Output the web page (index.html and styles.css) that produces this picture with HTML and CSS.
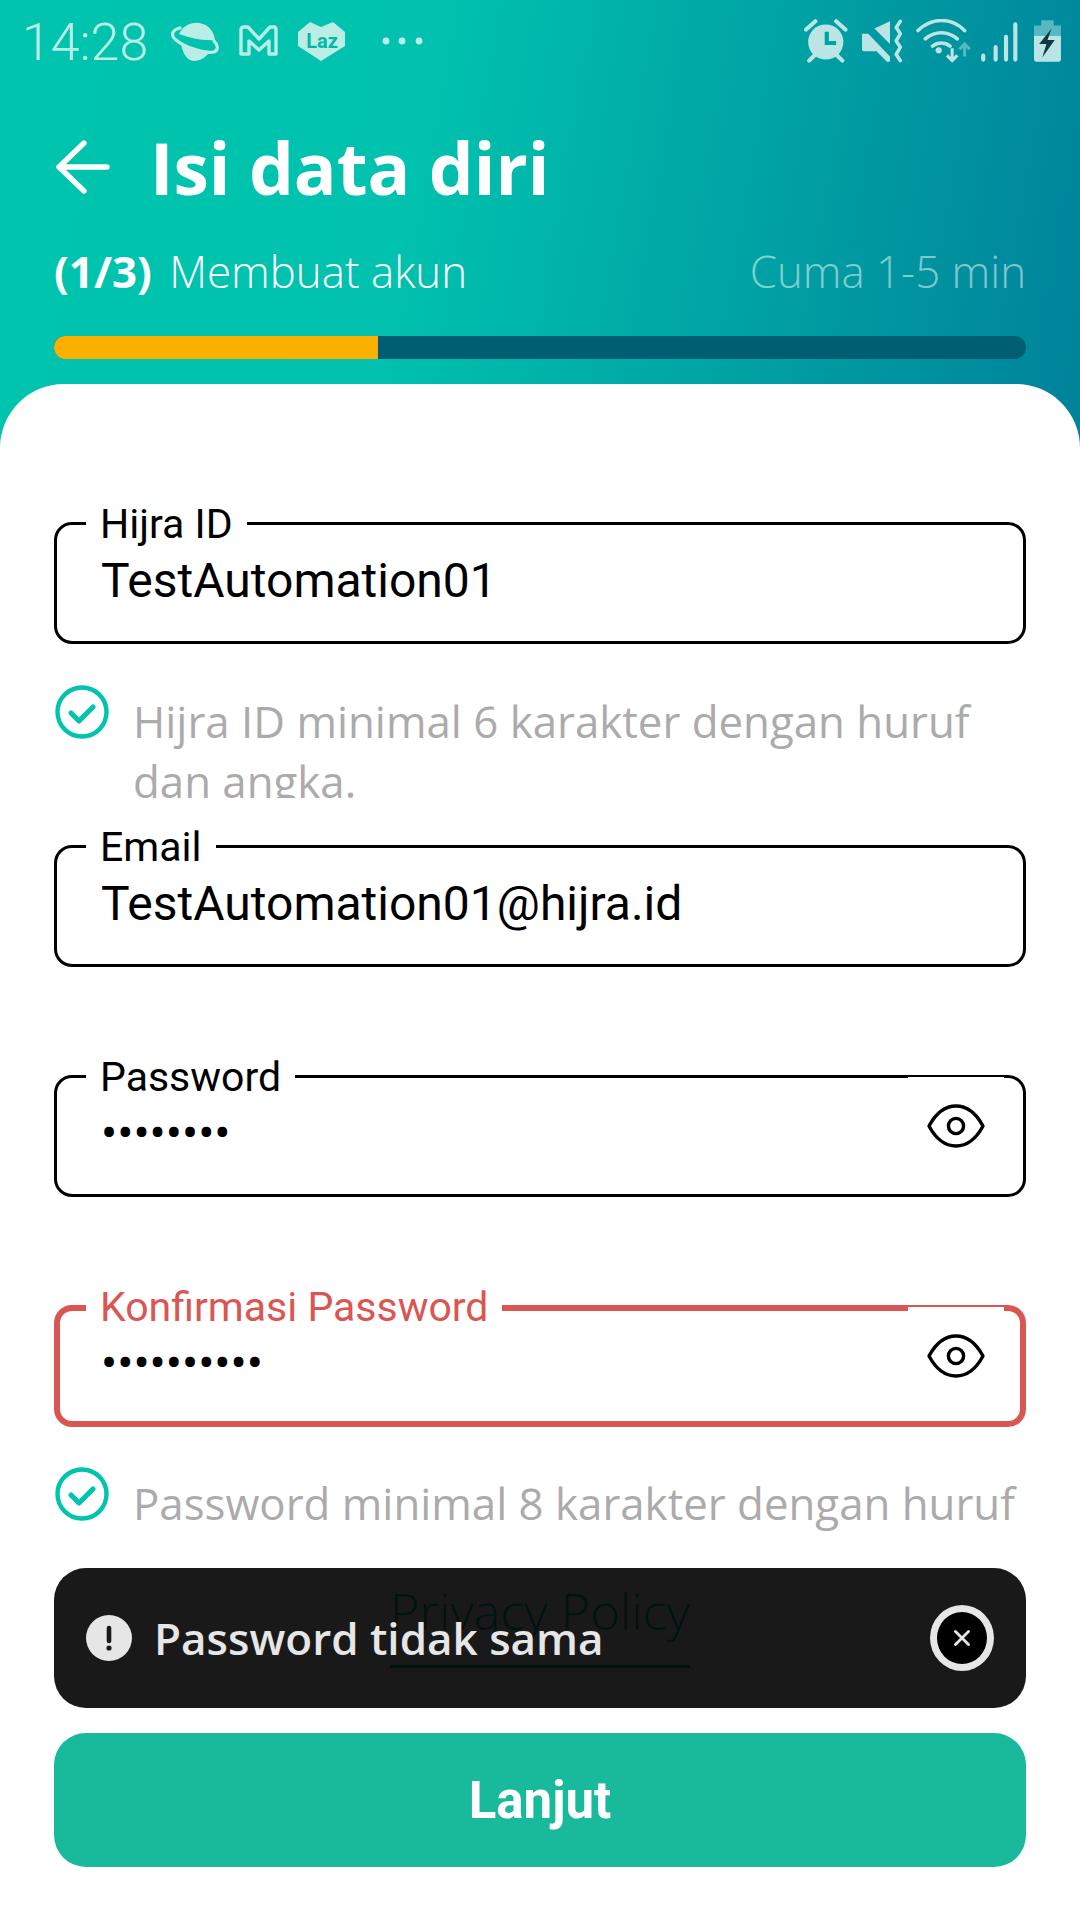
FILE: index.html
```html
<!DOCTYPE html>
<html lang="en">
<head>
    <meta charset="UTF-8">
    <meta name="viewport" content="width=device-width, initial-scale=1.0">
    <title>Isi data diri</title>
    <link rel="stylesheet" href="styles.css">
</head>
<body>
<div class="page">
    <header class="header">
        <!-- Status bar -->
        <div class="status-bar">
            <span class="status-time">14:28</span>
            <svg class="status-left-icons" width="260" height="44" viewBox="165 20 260 44">
                <path d="M179 34C183 25 192 22 199 23c9 1 15 8 16 17-11 1-25-2-36-6z" fill="#b9ede6"/>
                <path d="M181 43c9 5 20 8 29 8-3 6-10 10-16 10-7 0-12-9-13-18z" fill="#b9ede6"/>
                <path d="M180 28c-8 2-10 7-4 12 8 7 29 14 38 12 5-2 4-7 0-11" fill="none" stroke="#b9ede6" stroke-width="3.2" stroke-linecap="round"/>
                <path d="M241 54V30q0-3 3-3h4l11 12 11-12h4q2 0 2 3v24h-7V41l-10 9-10-9v13z" fill="none" stroke="#b9ede6" stroke-width="3.4" stroke-linejoin="round"/>
                <path d="M298 32l12-10 11 5 12-5 12 10v14l-24 15-23-15z" fill="#b9ede6"/>
                <text x="322" y="48" class="laz-text" text-anchor="middle">Laz</text>
                <circle cx="386" cy="41" r="3.4" fill="#b9ede6"/>
                <circle cx="402" cy="41" r="3.4" fill="#b9ede6"/>
                <circle cx="419" cy="41" r="3.4" fill="#b9ede6"/>
            </svg>
            <svg class="status-right-icons" width="259" height="46" viewBox="795 19 250 44">
                <!-- alarm -->
                <circle cx="816" cy="41" r="17" fill="#bbe5e5"/>
                <path d="M817 31v11h9" fill="none" stroke="#00a3a3" stroke-width="4"/>
                <path d="M797 29l9-8M835 29l-9-8M805 54l-5 5M827 54l5 5" stroke="#bbe5e5" stroke-width="4" stroke-linecap="round"/>
                <!-- muted speaker -->
                <path d="M851 33h6l21 22v5h-3l-10-10h-12q-2 0-2-2zM878 21v22l-15-15z" fill="#bbe5e5"/>
                <path d="M888 21l-4 6 4 6-4 7 4 6-4 7 4 6" fill="none" stroke="#bbe5e5" stroke-width="3.4" stroke-linecap="round" stroke-linejoin="round"/>
                <!-- wifi -->
                <path d="M905 30c13-13 33-13 45 0M912 38c9-8 22-8 31 0M919 45c5-4 12-4 17 0" fill="none" stroke="#bbe5e5" stroke-width="3.4" stroke-linecap="round"/>
                <circle cx="925" cy="49" r="3" fill="#bbe5e5"/>
                <path d="M938 47v11M933 54l5 5 5-5" fill="none" stroke="#bbe5e5" stroke-width="3"/>
                <path d="M950 55V44M945 48l5-5 5 5" fill="none" stroke="#57b9b9" stroke-width="3"/>
                <!-- signal -->
                <path d="M968 54v4M980 46v12M990 36v22M999 24v34" stroke="#bbe5e5" stroke-width="4" stroke-linecap="round"/>
                <!-- battery -->
                <path d="M1024 20h12v5h7v10h-26V25h7z" fill="#57b9c0"/>
                <path d="M1017 35h26v23q0 2-2 2h-22q-2 0-2-2z" fill="#bbe5e5"/>
                <path d="M1034 28l-12 15h7l-4 13 12-17h-7z" fill="#0f3a40"/>
            </svg>
        </div>

        <!-- Title -->
        <div class="title-row">
            <svg class="back-icon" width="54" height="54" viewBox="0 0 54 54">
                <path d="M28 3L3 27l25 24M3 27h48" fill="none" stroke="#fff" stroke-width="5.4" stroke-linecap="round" stroke-linejoin="round"/>
            </svg>
            <h1 class="title">Isi data diri</h1>
        </div>

        <!-- Step info -->
        <div class="step-row">
            <span class="step-label"><b>(1/3)</b> Membuat akun</span>
            <span class="step-time">Cuma 1-5 min</span>
        </div>
        <div class="progress"><div class="progress-fill"></div></div>
    </header>

    <main class="sheet">
        <!-- Hijra ID -->
        <div class="field has-hint">
            <span class="field-label">Hijra ID</span>
            <span class="field-value">TestAutomation01</span>
        </div>
        <div class="hint clipped">
            <svg class="check-icon" width="54" height="54" viewBox="0 0 54 54">
                <circle cx="27" cy="27" r="24.5" fill="none" stroke="#00c4ae" stroke-width="4.4"/>
                <path d="M16 28l8 8 14-14" fill="none" stroke="#00c4ae" stroke-width="5.2" stroke-linecap="round" stroke-linejoin="round"/>
            </svg>
            <p class="hint-text">Hijra ID minimal 6 karakter dengan huruf dan angka.</p>
        </div>

        <!-- Email -->
        <div class="field">
            <span class="field-label">Email</span>
            <span class="field-value">TestAutomation01@hijra.id</span>
        </div>

        <!-- Password -->
        <div class="field">
            <span class="field-label">Password</span>
            <span class="field-value dots">••••••••</span>
            <div class="eye-box">
                <svg width="58" height="44" viewBox="0 0 58 44">
                    <path d="M2 22C9 9 18 2 29 2s20 7 27 20c-7 13-16 20-27 20S9 35 2 22z" fill="none" stroke="#000" stroke-width="3.4" stroke-linejoin="round"/>
                    <circle cx="29" cy="22" r="7.6" fill="none" stroke="#000" stroke-width="3.4"/>
                </svg>
            </div>
        </div>

        <!-- Konfirmasi Password -->
        <div class="field field-error has-hint">
            <span class="field-label">Konfirmasi Password</span>
            <span class="field-value dots">••••••••••</span>
            <div class="eye-box">
                <svg width="58" height="44" viewBox="0 0 58 44">
                    <path d="M2 22C9 9 18 2 29 2s20 7 27 20c-7 13-16 20-27 20S9 35 2 22z" fill="none" stroke="#000" stroke-width="3.4" stroke-linejoin="round"/>
                    <circle cx="29" cy="22" r="7.6" fill="none" stroke="#000" stroke-width="3.4"/>
                </svg>
            </div>
        </div>
        <div class="hint">
            <svg class="check-icon" width="54" height="54" viewBox="0 0 54 54">
                <circle cx="27" cy="27" r="24.5" fill="none" stroke="#00c4ae" stroke-width="4.4"/>
                <path d="M16 28l8 8 14-14" fill="none" stroke="#00c4ae" stroke-width="5.2" stroke-linecap="round" stroke-linejoin="round"/>
            </svg>
            <p class="hint-text">Password minimal 8 karakter dengan huruf</p>
        </div>

        <a class="privacy">Privacy Policy</a>

        <button class="next-button">Lanjut</button>

        <!-- Toast over the form -->
        <div class="toast">
            <span class="toast-icon">
                <svg width="46" height="46" viewBox="0 0 46 46">
                    <circle cx="23" cy="23" r="23" fill="#e6e6e6"/>
                    <path d="M23 13v13" stroke="#1a1a1a" stroke-width="4.6" stroke-linecap="round"/>
                    <circle cx="23" cy="33" r="2.6" fill="#1a1a1a"/>
                </svg>
            </span>
            <span class="toast-text">Password tidak sama</span>
            <span class="toast-close">
                <svg width="16" height="16" viewBox="0 0 16 16">
                    <path d="M1.5 1.5l13 13M14.5 1.5l-13 13" stroke="#e6e6e6" stroke-width="2.8" stroke-linecap="round"/>
                </svg>
            </span>
        </div>
    </main>
</div>
</body>
</html>
```

FILE: styles.css
```css
* {
    box-sizing: border-box;
}
body {
    margin: 0;
    background-color: white;
    font-family: "Open Sans", sans-serif;
    overflow: hidden;
}
.page {
    height: 1920px;
    display: flex;
    flex-direction: column;
}
.header {
    height: 448px;
    flex-shrink: 0;
    padding: 0 54px;
    color: white;
    background: linear-gradient(100deg, #00c4ae 0%, #00c2ae 38%, #00a9a6 62%, #00829b 100%);
}
.status-bar {
    height: 84px;
    margin: 0 -54px;
    padding: 0 17px 0 22px;
    display: flex;
    align-items: center;
}
.status-time {
    font-family: Roboto, sans-serif;
    font-weight: 300;
    font-size: 52px;
    color: #b9ede6;
    width: 143px;
}
.laz-text {
    font-family: Roboto, sans-serif;
    font-weight: 700;
    font-size: 20px;
    fill: #00b8a8;
}
.status-right-icons {
    margin-left: auto;
}
.title-row {
    height: 84px;
    margin-top: 42px;
    display: flex;
    align-items: center;
    gap: 40px;
}
.back-icon {
    margin: -2px 0 0 2px;
}
.title {
    margin: 0;
    font-size: 71px;
    font-weight: 700;
    line-height: 84px;
}
.step-row {
    height: 60px;
    margin-top: 31px;
    display: flex;
    justify-content: space-between;
    align-items: center;
    font-size: 43.8px;
    font-weight: 300;
}
.step-label b {
    font-weight: 700;
    margin-right: 6px;
}
.step-time {
    color: rgba(255, 255, 255, 0.5);
}
.progress {
    height: 23px;
    margin-top: 35px;
    background-color: #005e72;
    border-radius: 12px;
    overflow: hidden;
}
.progress-fill {
    width: 324px;
    height: 100%;
    background-color: #fbb000;
}
.sheet {
    flex: 1;
    margin-top: -64px;
    padding: 138px 54px 53px;
    background-color: white;
    border-radius: 64px 64px 0 0;
    display: flex;
    flex-direction: column;
    position: relative;
}
.field {
    height: 122px;
    margin-bottom: 108px;
    padding: 26px 44px 0;
    border: 3px solid #000;
    border-radius: 18px;
    position: relative;
    flex-shrink: 0;
}
.field.has-hint {
    margin-bottom: 0;
}
.field-label {
    position: absolute;
    top: -23px;
    left: 29px;
    padding: 0 14px;
    background-color: white;
    font-family: Roboto, sans-serif;
    font-size: 41px;
    line-height: 44px;
    color: #000;
}
.field-value {
    font-family: Roboto, sans-serif;
    font-size: 48px;
    line-height: 60px;
    color: #000;
    display: block;
}
.dots {
    line-height: 64px;
    margin-top: -2px;
}
.eye-box {
    position: absolute;
    top: -1px;
    right: 19px;
    width: 96px;
    height: 96px;
    background-color: white;
    display: flex;
    justify-content: center;
    padding-top: 27px;
}
.field-error {
    border: 6px solid #da5652;
}
.field-error .field-label {
    top: -26px;
    left: 26px;
    color: #da5652;
}
.field-error .field-value {
    margin: -5px 0 0 -3px;
}
.field-error .eye-box {
    top: -4px;
    right: 16px;
}
.hint {
    margin-top: 40px;
    display: flex;
    gap: 24px;
    flex-shrink: 0;
    padding-left: 1px;
}
.hint.clipped {
    height: 113px;
    margin-top: 41px;
    margin-bottom: 47px;
    overflow: hidden;
}
.check-icon {
    flex-shrink: 0;
}
.hint-text {
    margin: 0;
    padding-top: 6px;
    font-size: 43.8px;
    line-height: 60px;
    color: #ababab;
}
.privacy {
    margin-top: 48px;
    padding-bottom: 24px;
    align-self: center;
    font-size: 50.5px;
    font-weight: 300;
    line-height: 60px;
    color: #00c4ae;
    border-bottom: 3px solid #00c4ae;
}
.next-button {
    margin-top: auto;
    height: 134px;
    border: none;
    border-radius: 32px;
    background-color: #18ba9b;
    color: white;
    font-family: Roboto, sans-serif;
    font-weight: 700;
    font-size: 51px;
}
.toast {
    position: absolute;
    left: 54px;
    right: 54px;
    bottom: 212px;
    height: 140px;
    padding: 0 32px;
    border-radius: 32px;
    background-color: rgba(0, 0, 0, 0.9);
    display: flex;
    align-items: center;
    gap: 22px;
}
.toast-icon {
    display: flex;
}
.toast-text {
    font-size: 44px;
    font-weight: 600;
    color: #e6e6e6;
}
.toast-close {
    margin-left: auto;
    width: 64px;
    height: 66px;
    border: 7px solid #e6e6e6;
    border-radius: 50%;
    background-color: #000;
    display: flex;
    justify-content: center;
    align-items: center;
}
```
